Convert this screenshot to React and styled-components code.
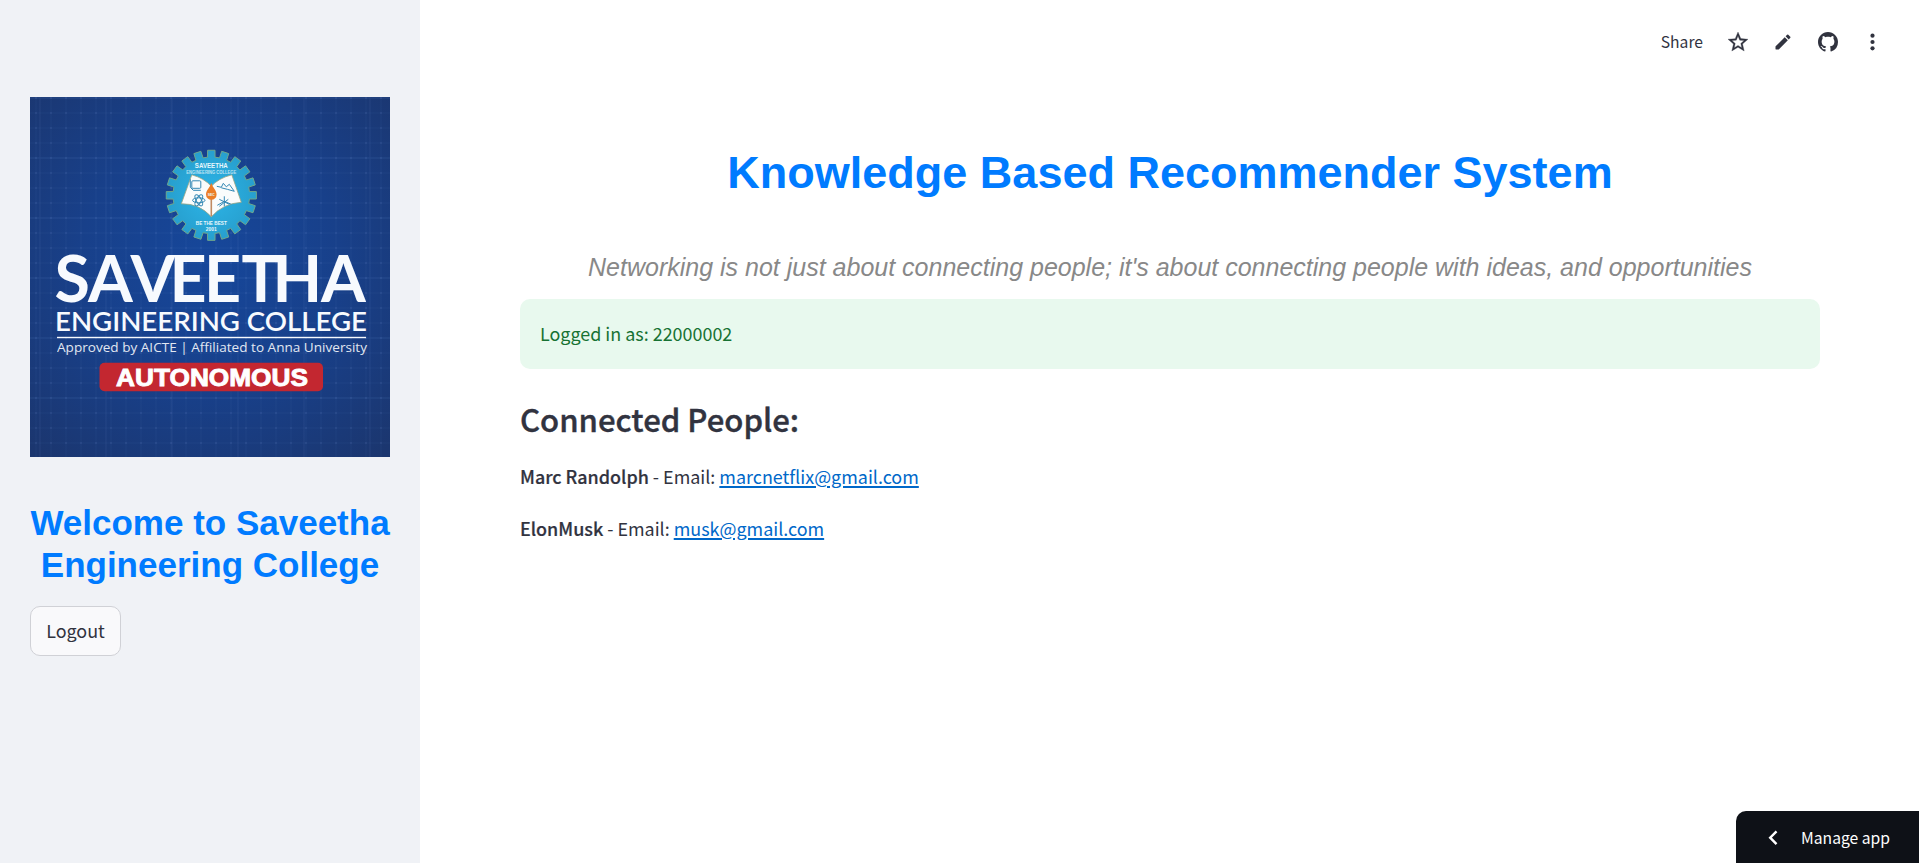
import React from "react";
import styled, { createGlobalStyle } from "styled-components";

const Global = createGlobalStyle`
  *, *::before, *::after { box-sizing: border-box; }
  html, body, #root { height: 100%; }
  body { margin: 0; background: #fff; overflow: hidden; }
`;

const sans = `"Noto Sans CJK SC", "Noto Sans", sans-serif`;
const arial = `"Liberation Sans", Arial, sans-serif`;

const Page = styled.div`
  display: flex;
  height: 100vh;
  color: #31333f;
  font: 400 17.93px/32px ${sans};
  position: relative;
`;

const Sidebar = styled.aside`
  flex: 0 0 420px;
  background: #f0f2f6;
  padding: 97px 30px 0;
  display: flex;
  flex-direction: column;
  align-items: flex-start;
`;

const Welcome = styled.h1`
  margin: 45px -10px 0;
  width: 380px;
  font: 700 35px/42px ${arial};
  text-align: center;
  white-space: nowrap;
  color: #007bff;
`;

const LogoutButton = styled.button`
  margin: 20px 0 0;
  width: 91px;
  height: 50px;
  padding: 0 0 2px;
  border: 1px solid #d0d1d6;
  border-radius: 10px;
  background: #f9f9fb;
  color: #31333f;
  font: 400 17.93px/32px ${sans};
`;

const Main = styled.main`
  flex: 1;
  display: flex;
  flex-direction: column;
`;

const Toolbar = styled.header`
  display: flex;
  align-items: center;
  justify-content: flex-end;
  height: 84px;
  padding-right: 34px;
`;

const Share = styled.span`
  font-size: 15.7px;
  margin-right: 23px;
`;

const IconButton = styled.button`
  display: flex;
  align-items: center;
  justify-content: center;
  width: 24px;
  height: 24px;
  padding: 0;
  border: 0;
  background: none;
  color: #31333f;
  margin-left: ${(p) => p.$gap || 0}px;
`;

const Content = styled.section`
  padding: 0 99px 0 100px;
`;

const Title = styled.h1`
  margin: 62px 0 0;
  font: 700 45px/54px ${arial};
  text-align: center;
  color: #007bff;
`;

const Tagline = styled.p`
  margin: 47px 0 0;
  font: italic 400 25px/40px ${arial};
  text-align: center;
  color: #888;
  white-space: nowrap;
`;

const Alert = styled.div`
  margin-top: 12px;
  height: 70px;
  padding: 18px 20px;
  border-radius: 10px;
  background: #e8f9ee;
  color: #177233;
`;

const Heading = styled.h2`
  margin: 28px 0 0;
  font: 500 31.1px/43px ${sans};
  -webkit-text-stroke: 0.4px currentColor;
`;

const Person = styled.p`
  margin: 20px 0 0;
`;

const Name = styled.strong`
  font-weight: 500;
  -webkit-text-stroke: 0.2px currentColor;
`;

const Mail = styled.a`
  color: #0068c9;
  text-decoration: underline;
  text-decoration-thickness: 2px;
  text-underline-offset: 2px;
`;

const ManageApp = styled.button`
  position: absolute;
  right: 0;
  bottom: 0;
  width: 183px;
  height: 52px;
  display: flex;
  align-items: center;
  gap: 18px;
  padding: 2px 0 0 27px;
  border: 0;
  border-radius: 10px 0 0 0;
  background: #0e1117;
  color: #fff;
  font: 400 15.7px/24px ${sans};
`;

const LogoArt = styled.svg`
  display: block;
  width: 360px;
  height: 360px;
  flex: none;
`;

const TEETH = 20;
const gearPath = (() => {
  const pts = [];
  const add = (r, deg) => {
    const a = ((deg - 90) * Math.PI) / 180;
    pts.push(`${(r * Math.cos(a)).toFixed(2)} ${(r * Math.sin(a)).toFixed(2)}`);
  };
  for (let i = 0; i < TEETH; i++) {
    const c = (i * 360) / TEETH;
    add(38.3, c - 5.6);
    add(45.2, c - 4.7);
    add(45.2, c + 4.7);
    add(38.3, c + 5.6);
  }
  return `M${pts.join("L")}Z`;
})();

function CollegeLogo() {
  const fit = "spacingAndGlyphs";
  return (
    <LogoArt viewBox="0 0 360 360">
      <defs>
        <radialGradient id="bg" cx="50%" cy="45%" r="72%">
          <stop offset="0" stopColor="#16479b" />
          <stop offset="0.5" stopColor="#18408a" />
          <stop offset="1" stopColor="#1b366f" />
        </radialGradient>
        <radialGradient id="gear">
          <stop offset="0" stopColor="#2cb5e8" />
          <stop offset="1" stopColor="#279fce" />
        </radialGradient>
        <pattern id="dots" width="15" height="15" patternUnits="userSpaceOnUse">
          <circle cx="6" cy="1" r="0.9" fill="#7fa5e8" opacity="0.16" />
          <path d="M0 1H15M6 0V15" stroke="#7fa5e8" strokeWidth="1" opacity="0.04" />
        </pattern>
        <pattern id="grid" width="66" height="60" patternUnits="userSpaceOnUse">
          <path d="M0 1H66M10 0V60" stroke="#7fa5e8" strokeWidth="1.2" opacity="0.08" />
        </pattern>
      </defs>
      <rect width="360" height="360" fill="url(#bg)" />
      <rect width="360" height="360" fill="url(#dots)" />
      <rect width="360" height="360" fill="url(#grid)" />

      <g transform="translate(181.3 98.3)">
        <path d={gearPath} fill="url(#gear)" stroke="#6fa78c" strokeWidth="1" />
        <path
          d="M-19.5-20.5Q-7-17 0-9Q7-17 20.500-20.500L30 7Q12 8 0 21.500Q-12 8-30 8.500Z"
          fill="#fafcfc" stroke="#9aa583" strokeWidth="0.8"
        />
        <path d="M0-11V21" stroke="#c08a62" strokeWidth="1.6" />
        <path d="M0-12.500C1-8 5.300-5 5.300-.8A5.300 5.300 0 0 1-5.300-.8C-5.300-5-1-8 0-12.500Z" fill="#ec7d26" />
        <g fill="none" stroke="#3388b4" strokeWidth="1">
          <rect x="-19.500" y="-14.500" width="9" height="7.500" rx="1" />
          <path d="M-21-16V-8L-18-5H-10.500" />
          <ellipse cx="-12.500" cy="5" rx="6.200" ry="2.500" />
          <ellipse cx="-12.500" cy="5" rx="6.200" ry="2.500" transform="rotate(60 -12.500 5)" />
          <ellipse cx="-12.500" cy="5" rx="6.200" ry="2.500" transform="rotate(120 -12.500 5)" />
          <path d="M5.500-9L10-8L12-12L15-8.500L18-11L23-4L16-6L10-7.500" />
          <path d="M13 1V11M8 4L18 9M8 11L17 4M6 10L13 6L20 9" />
        </g>
        <g fill="#e6f7fc" textAnchor="middle" fontFamily="Liberation Sans, sans-serif" fontWeight="700">
          <text y="-27.500" fontSize="6.500" textLength="33" lengthAdjust={fit}>SAVEETHA</text>
          <text y="-21.800" fontSize="4.500" textLength="50" lengthAdjust={fit} opacity="0.75">ENGINEERING COLLEGE</text>
          <text y="30" fontSize="5" textLength="31" lengthAdjust={fit}>BE THE BEST</text>
          <text y="35.300" fontSize="4.500" textLength="11" lengthAdjust={fit}>2001</text>
          <text y="1" fontSize="4" textLength="7" lengthAdjust={fit}>SEC</text>
        </g>
      </g>

      <g fill="#f7fafe" fontFamily="Lato, sans-serif">
        <text x="24.500 58 100.500 139.500 174 211.500 242.500 291" y="205" fontSize="64.500" fontWeight="700">SAVEETHA</text>
        <text x="25" y="233.500" fontSize="27" fontWeight="600" textLength="312" lengthAdjust={fit}>ENGINEERING COLLEGE</text>
        <rect x="27" y="239.800" width="309" height="1.400" />
        <text x="27" y="255.300" fontSize="12.300" textLength="310" lengthAdjust={fit} fontFamily="Open Sans, sans-serif" fontWeight="500" opacity="0.9">
          Approved by AICTE | Affiliated to Anna University
        </text>
      </g>
      <rect x="69.500" y="265.800" width="223.500" height="28.500" rx="5" fill="#c32730" />
      <text x="86" y="288.600" fontSize="24.500" fontWeight="700" textLength="192" lengthAdjust={fit}
        fontFamily="Liberation Sans, sans-serif" fill="#fff" stroke="#fff" strokeWidth="0.900">
        AUTONOMOUS
      </text>
    </LogoArt>
  );
}

const StarIcon = () => (
  <svg width="24" height="24" viewBox="0 0 24 24" fill="currentColor" stroke="currentColor" strokeWidth="0.3">
    <path d="M22 9.240l-7.190-.62L12 2 9.190 8.630 2 9.240l5.460 4.730L5.820 21 12 17.270 18.180 21l-1.630-7.030L22 9.240zM12 15.400l-3.760 2.270 1-4.280-3.320-2.880 4.380-.38L12 6.100l1.710 4.040 4.380.38-3.320 2.880 1 4.280L12 15.400z" />
  </svg>
);

const PencilIcon = () => (
  <svg width="20" height="20" viewBox="0 0 24 24" fill="currentColor">
    <path d="M3 17.460v3.040c0 .28.22.5.5.5h3.040c.13 0 .26-.05.35-.15L17.810 9.940l-3.750-3.750L3.150 17.100c-.1.1-.15.22-.15.36zM20.710 7.040a.996.996 0 000-1.410l-2.340-2.340a.996.996 0 00-1.410 0l-1.830 1.830 3.750 3.750 1.830-1.830z" />
  </svg>
);

const GithubIcon = () => (
  <svg width="20" height="20" viewBox="0 0 16 16" fill="currentColor">
    <path d="M8 0C3.580 0 0 3.580 0 8c0 3.540 2.290 6.530 5.470 7.590.4.070.55-.17.55-.38 0-.19-.01-.82-.01-1.490-2.010.37-2.530-.49-2.690-.94-.09-.23-.48-.94-.82-1.130-.28-.15-.68-.52-.01-.53.63-.01 1.080.58 1.230.82.72 1.210 1.870.87 2.330.66.070-.52.28-.87.51-1.070-1.780-.2-3.640-.89-3.640-3.950 0-.87.31-1.590.82-2.150-.08-.2-.36-1.020.08-2.120 0 0 .67-.21 2.200.82.64-.18 1.320-.27 2-.27s1.360.09 2 .27c1.530-1.040 2.200-.82 2.200-.82.44 1.100.16 1.920.08 2.120.51.56.82 1.270.82 2.150 0 3.070-1.870 3.750-3.650 3.950.29.25.54.73.54 1.480 0 1.070-.01 1.930-.01 2.200 0 .21.15.46.55.38A8.010 8.010 0 0016 8c0-4.420-3.580-8-8-8z" />
  </svg>
);

const DotsIcon = () => (
  <svg width="24" height="24" viewBox="0 0 24 24" fill="currentColor">
    <circle cx="11.500" cy="5.700" r="2.100" />
    <circle cx="11.500" cy="12" r="2.100" />
    <circle cx="11.500" cy="18.300" r="2.100" />
  </svg>
);

const ChevronIcon = () => (
  <svg width="20" height="20" viewBox="0 0 20 20" fill="none" stroke="currentColor" strokeWidth="2.400">
    <path d="M13.500 3.300L7.200 9.700L13.500 16.100" />
  </svg>
);

const people = [
  { name: "Marc Randolph", email: "marcnetflix@gmail.com" },
  { name: "ElonMusk", email: "musk@gmail.com" },
];

export default function App() {
  return (
    <Page>
      <Global />
      <Sidebar>
        <CollegeLogo />
        <Welcome>Welcome to Saveetha<br />Engineering College</Welcome>
        <LogoutButton>Logout</LogoutButton>
      </Sidebar>
      <Main>
        <Toolbar>
          <Share>Share</Share>
          <IconButton><StarIcon /></IconButton>
          <IconButton $gap={21}><PencilIcon /></IconButton>
          <IconButton $gap={21}><GithubIcon /></IconButton>
          <IconButton $gap={21}><DotsIcon /></IconButton>
        </Toolbar>
        <Content>
          <Title>Knowledge Based Recommender System</Title>
          <Tagline>Networking is not just about connecting people; it's about connecting people with ideas, and opportunities</Tagline>
          <Alert>Logged in as: 22000002</Alert>
          <Heading>Connected People:</Heading>
          {people.map((p) => (
            <Person key={p.email}>
              <Name>{p.name}</Name> - Email: <Mail href={`mailto:${p.email}`}>{p.email}</Mail>
            </Person>
          ))}
        </Content>
      </Main>
      <ManageApp><ChevronIcon />Manage app</ManageApp>
    </Page>
  );
}
